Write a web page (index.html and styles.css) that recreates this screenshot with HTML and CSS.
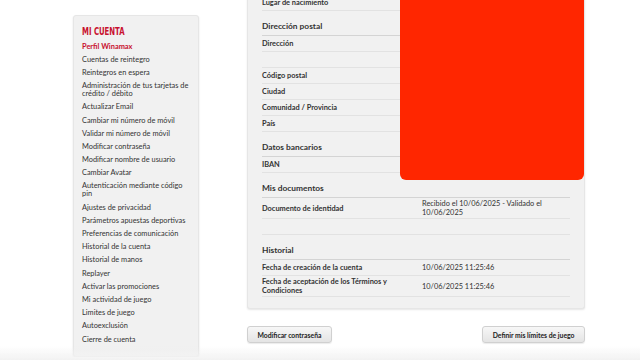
FILE: index.html
```html
<!doctype html>
<html>
<head>
    <title>Mi cuenta</title>
    <link rel="stylesheet" href="styles.css">
</head>
<body>
    <div class="page">
        <div class="sidebar">
            <h3>MI CUENTA</h3>
            <ul>
                <li class="active">Perfil Winamax</li>
                <li>Cuentas de reintegro</li>
                <li>Reintegros en espera</li>
                <li>Administración de tus tarjetas de crédito / débito</li>
                <li>Actualizar Email</li>
                <li>Cambiar mi número de móvil</li>
                <li>Validar mi número de móvil</li>
                <li>Modificar contraseña</li>
                <li>Modificar nombre de usuario</li>
                <li>Cambiar Avatar</li>
                <li>Autenticación mediante código pin</li>
                <li>Ajustes de privacidad</li>
                <li>Parámetros apuestas deportivas</li>
                <li>Preferencias de comunicación</li>
                <li>Historial de la cuenta</li>
                <li>Historial de manos</li>
                <li>Replayer</li>
                <li>Activar las promociones</li>
                <li>Mi actividad de juego</li>
                <li>Limites de juego</li>
                <li>Autoexclusión</li>
                <li>Cierre de cuenta</li>
            </ul>
        </div>

        <div class="main">
            <div class="panel">
                <div class="row"><span class="label">Lugar de nacimiento</span><span></span></div>

                <div class="section">Dirección postal</div>
                <div class="row"><span class="label">Dirección</span><span></span></div>
                <div class="row"><span class="label"></span><span></span></div>
                <div class="row"><span class="label">Código postal</span><span></span></div>
                <div class="row"><span class="label">Ciudad</span><span></span></div>
                <div class="row"><span class="label">Comunidad / Provincia</span><span></span></div>
                <div class="row"><span class="label">País</span><span></span></div>

                <div class="section">Datos bancarios</div>
                <div class="row"><span class="label">IBAN</span><span></span></div>

                <div class="section">Mis documentos</div>
                <div class="row"><span class="label">Documento de identidad</span><span>Recibido el 10/06/2025 - Validado el 10/06/2025</span></div>
                <div class="row"><span class="label"></span><span></span></div>

                <div class="section">Historial</div>
                <div class="row"><span class="label">Fecha de creación de la cuenta</span><span>10/06/2025 11:25:46</span></div>
                <div class="row"><span class="label">Fecha de aceptación de los Términos y Condiciones</span><span>10/06/2025 11:25:46</span></div>

                <div class="redacted"></div>
            </div>

            <div class="actions">
                <button>Modificar contraseña</button>
                <button>Definir mis límites de juego</button>
            </div>
        </div>
    </div>
    <div class="fade"></div>
</body>
</html>
```

FILE: styles.css
```css
body {
    margin: 0;
    background-color: #fff;
    font-family: 'Lato', 'Noto Sans', sans-serif;
    color: #333;
}
.page {
    display: flex;
    align-items: flex-start;
    padding-left: 73px;
    gap: 48px;
}
.sidebar {
    width: 126px;
    box-sizing: border-box;
    margin-top: 15px;
    padding: 10px 8px 10px 8px;
    background-color: #f1f1f1;
    border: 1px solid #e6e6e6;
    border-radius: 3px;
    box-shadow: 0 1px 2px rgba(0,0,0,0.12);
}
.sidebar h3 {
    margin: 0 0 2px 0;
    font-family: 'DejaVu Sans Condensed', 'DejaVu Sans', sans-serif;
    font-size: 11px;
    font-weight: bold;
    line-height: 12px;
    color: #c8102e;
    transform: scaleX(0.7);
    transform-origin: left center;
    white-space: nowrap;
}
.sidebar ul {
    list-style: none;
    margin: 0;
    padding: 0;
}
.sidebar li {
    font-size: 7.4px;
    line-height: 8px;
    padding: 2.6px 0;
}
.sidebar li.active {
    color: #c8102e;
    font-weight: bold;
}
.main {
    width: 338px;
    margin-top: -5px;
}
.panel {
    position: relative;
    background-color: #f1f1f1;
    border: 1px solid #e6e6e6;
    border-top: none;
    border-radius: 0 0 3px 3px;
    padding: 0 14px 11px 14px;
    box-shadow: 0 1px 2px rgba(0,0,0,0.1);
}
.row {
    display: grid;
    grid-template-columns: 160px 1fr;
    align-items: center;
    min-height: 16px;
    box-sizing: border-box;
    padding: 1px 0;
    border-bottom: 1px solid #e2e2e2;
    font-size: 7.4px;
    line-height: 9px;
}
.row .label {
    font-weight: bold;
}
.section {
    padding: 10px 0 4px 0;
    font-size: 8.4px;
    line-height: 10px;
    font-weight: bold;
    border-bottom: 1px solid #d4d4d4;
}
.redacted {
    position: absolute;
    left: 152px;
    top: 0;
    width: 184px;
    height: 185px;
    background-color: #ff2600;
    border-radius: 0 0 6px 6px;
}
.actions {
    display: flex;
    justify-content: space-between;
    margin-top: 17px;
}
button {
    height: 17px;
    padding: 0 9.5px;
    font-family: 'Lato', 'Noto Sans', sans-serif;
    font-size: 6.8px;
    font-weight: bold;
    color: #222;
    background: linear-gradient(#f7f7f7, #e4e4e4);
    border: 1px solid #d0d0d0;
    border-radius: 3px;
    box-shadow: 0 1px 1px rgba(0,0,0,0.08);
}
.fade {
    position: fixed;
    left: 0;
    right: 0;
    bottom: 0;
    height: 14px;
    background: linear-gradient(rgba(245,245,245,0), #f2f2f2);
}
```
